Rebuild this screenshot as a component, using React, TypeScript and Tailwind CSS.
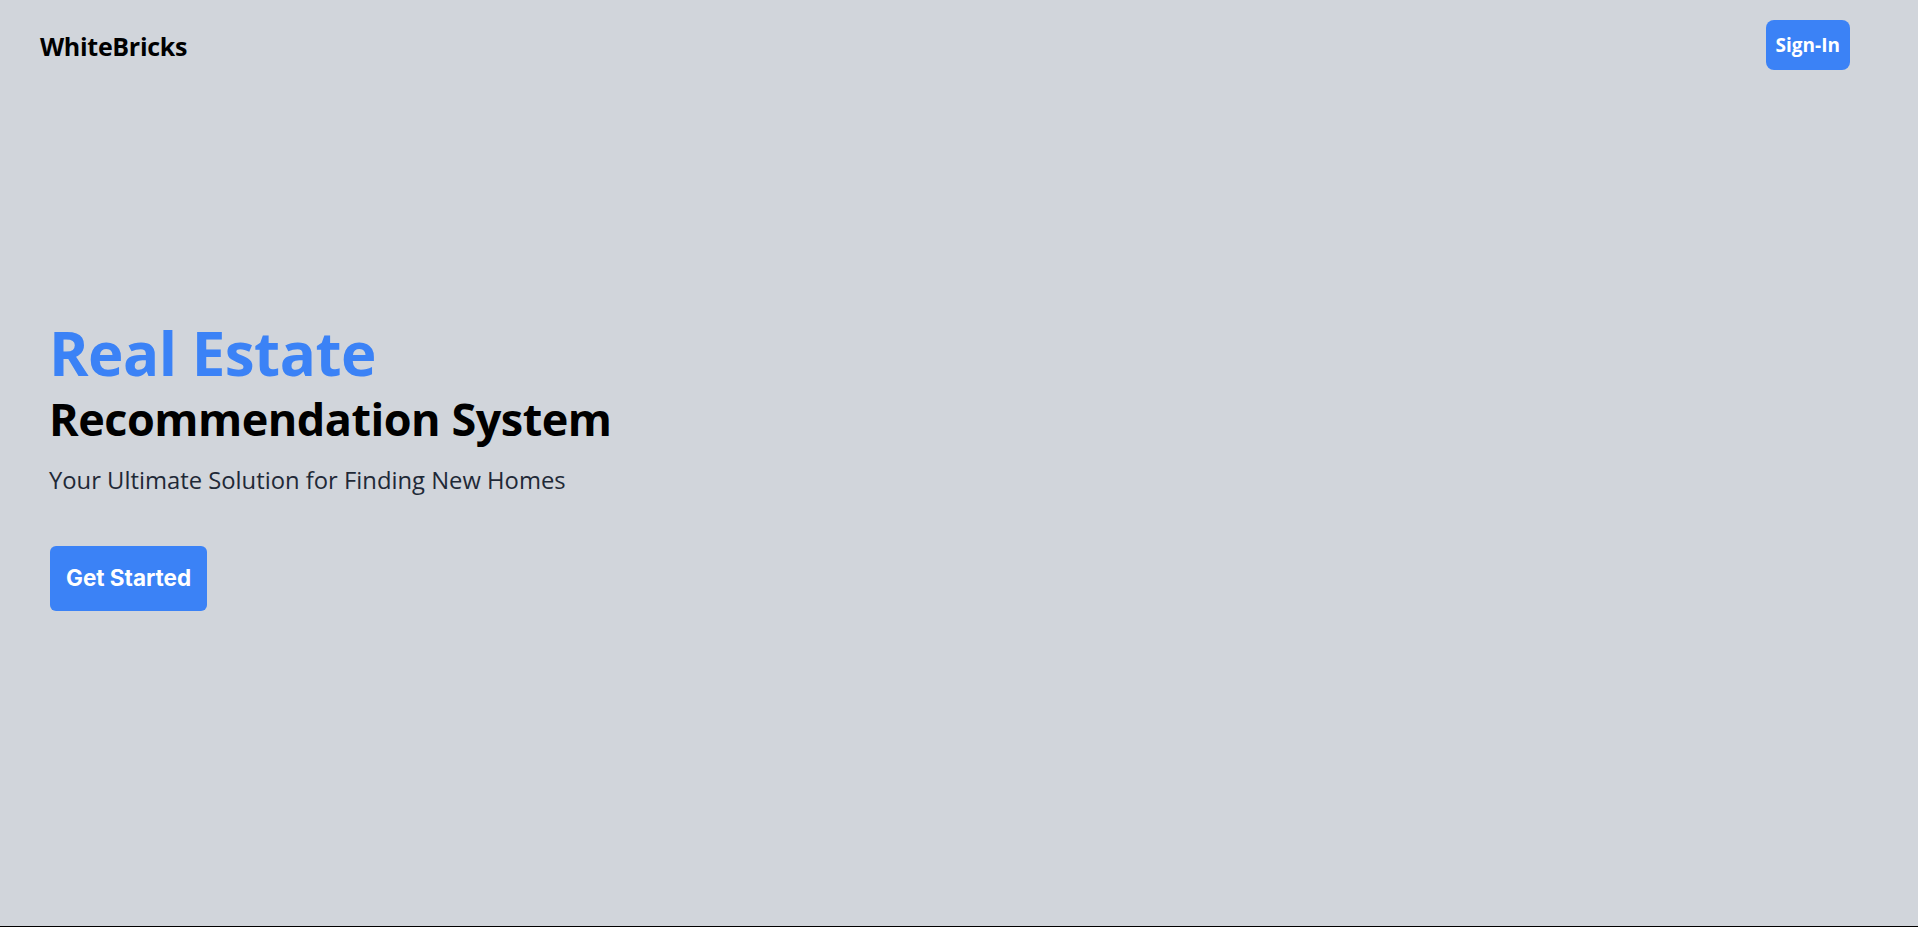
import React from "react";

export default function App() {
  return (
    <div
      className="h-screen w-full bg-[#d1d5db] border-b border-black flex flex-col"
      style={{ fontFamily: '"Open Sans", "Noto Sans", sans-serif' }}
    >
      <header className="flex items-center justify-between pl-10 pr-[68px] pt-5">
        <div className="text-[25px] font-bold text-black tracking-[-0.3px] mt-[3px]">WhiteBricks</div>
        <button className="h-[50px] px-[10px] rounded-lg bg-[#3b82f6] text-white text-[19px] font-bold">
          Sign-In
        </button>
      </header>
      <main className="flex flex-col items-start pl-[49px] mt-[253px]">
        <h1 className="text-[60px] leading-[60px] font-bold text-[#3b82f6] tracking-[-0.5px]">Real Estate</h1>
        <h2 className="text-[45px] leading-[56px] font-bold text-black tracking-[-0.5px] mt-2">
          Recommendation System
        </h2>
        <p className="text-[23.8px] text-[#1f2937] mt-4">Your Ultimate Solution for Finding New Homes</p>
        <button
          className="mt-[47px] ml-[1px] px-4 h-[65px] rounded-md bg-[#3b82f6] text-white text-[22.5px] font-bold"
          style={{ fontFamily: "Inter, sans-serif" }}
        >
          Get Started
        </button>
      </main>
    </div>
  );
}
